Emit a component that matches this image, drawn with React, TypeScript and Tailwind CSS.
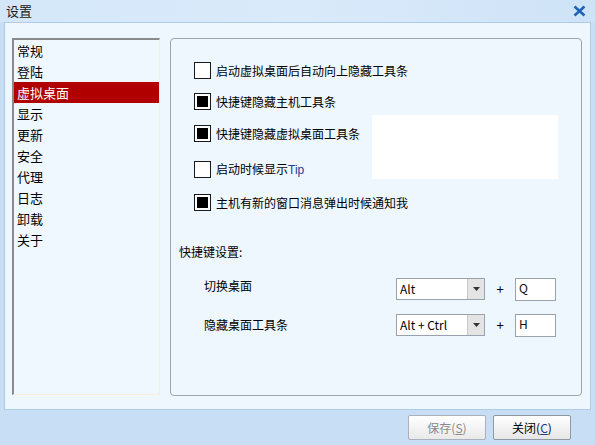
import React from "react";

const font = { fontFamily: '"Noto Sans CJK SC", "Liberation Sans", sans-serif' };

const menu = ["常规", "登陆", "虚拟桌面", "显示", "更新", "安全", "代理", "日志", "卸载", "关于"];

function Check({ checked }: { checked: boolean }) {
  return (
    <div className="flex h-[17px] w-[17px] items-center justify-center border border-[#1a1a1a] bg-white">
      {checked && <div className="h-[11px] w-[11px] bg-black" />}
    </div>
  );
}

function Select({ value }: { value: string }) {
  return (
    <div className="flex h-[22px] w-[89px] border border-[#9aa3ad] bg-white">
      <div className="flex flex-1 items-center pl-[3px] text-[12px] text-black">{value}</div>
      <div className="flex w-[17px] items-center justify-center border-l border-[#c8c8c8] bg-[#e4e4e4]">
        <svg width="7" height="4" viewBox="0 0 7 4">
          <path d="M0 0h7L3.5 4z" fill="#333" />
        </svg>
      </div>
    </div>
  );
}

function KeyBox({ value }: { value: string }) {
  return (
    <div className="h-[23px] w-[41px] border border-[#9aa3ad] bg-white pl-[3px] text-[12px] leading-[18px] text-[#111]">
      {value}
    </div>
  );
}

export default function App() {
  return (
    <div className="flex h-[445px] w-[595px] flex-col bg-[#c7def5] text-[12px] text-black" style={font}>
      <div className="flex h-[22px] items-center justify-between bg-gradient-to-r from-[#d4e7f9] via-[#d9eafa] to-[#cfe3f7] px-[6px]">
        <span className="text-[13px] text-[#1a1a1a]">设置</span>
        <svg width="13" height="12" viewBox="0 0 13 12" className="mr-[3px]">
          <path d="M1.5 1.5l10 9M11.5 1.5l-10 9" stroke="#1f63b8" strokeWidth="2.6" />
        </svg>
      </div>

      <div className="mx-[4px] flex h-[388px] gap-[10px] border border-[#aecbe8] bg-[#eef7fd] pl-[7px] pr-[8px] pt-[15px]">
        <div className="h-[357px] w-[148px] border-l-2 border-t-2 border-r border-b border-l-[#8a8a8a] border-t-[#8a8a8a] border-r-[#f4f0e0] border-b-[#f4f0e0] bg-[#f0f8ff]">
          {menu.map((m) => (
            <div
              key={m}
              className={
                "flex h-[21px] items-center pl-[3px] text-[13px] " +
                (m === "虚拟桌面" ? "bg-[#b00000] text-white" : "text-black")
              }
            >
              {m}
            </div>
          ))}
        </div>

        <div className="relative h-[358px] w-[412px] rounded-[4px] border border-[#9ea4aa] bg-[#eef7fd] pl-[23px]">
          <div className="absolute left-[201px] top-[76px] h-[64px] w-[186px] bg-white" />

          <div className="mt-[23px] flex h-[17px] items-center gap-[5px]">
            <Check checked={false} />
            <span>启动虚拟桌面后自动向上隐藏工具条</span>
          </div>
          <div className="mt-[14px] flex h-[17px] items-center gap-[5px]">
            <Check checked />
            <span>快捷键隐藏主机工具条</span>
          </div>
          <div className="mt-[15px] flex h-[17px] items-center gap-[5px]">
            <Check checked />
            <span>快捷键隐藏虚拟桌面工具条</span>
          </div>
          <div className="relative mt-[19px] flex h-[17px] items-center gap-[5px]">
            <Check checked={false} />
            <span>
              启动时候显示<span className="text-[#1c3c90]" style={{ fontFamily: '"Liberation Sans", sans-serif' }}>Tip</span>
            </span>
          </div>
          <div className="mt-[16px] flex h-[17px] items-center gap-[5px]">
            <Check checked />
            <span>主机有新的窗口消息弹出时候通知我</span>
          </div>

          <div className="-ml-[15px] mt-[32px] h-[17px] leading-[17px]">快捷键设置:</div>

          <div className="mt-[18px] flex h-[22px] items-center">
            <span className="ml-[10px] w-[192px] -translate-y-[3px]">切换桌面</span>
            <Select value="Alt" />
            <span className="w-[30px] text-center text-[13px]">+</span>
            <KeyBox value="Q" />
          </div>
          <div className="mt-[14px] flex h-[22px] items-center">
            <span className="ml-[10px] w-[192px]">隐藏桌面工具条</span>
            <Select value="Alt + Ctrl" />
            <span className="w-[30px] text-center text-[13px]">+</span>
            <KeyBox value="H" />
          </div>
        </div>
      </div>

      <div className="flex flex-1 items-center justify-end gap-[7px] pr-[24px]">
        <button className="h-[25px] w-[78px] rounded-[2px] border border-[#a9b2bc] bg-gradient-to-b from-white to-[#e9e9e9] text-[12px] text-[#8a8a8a]">
          保存(<span className="underline">S</span>)
        </button>
        <button className="h-[25px] w-[78px] rounded-[2px] border border-[#8e99a5] bg-gradient-to-b from-white to-[#e6e6e6] text-[12px] text-black">
          关闭(<span className="text-[#1c3c90] underline">C</span>)
        </button>
      </div>
    </div>
  );
}
